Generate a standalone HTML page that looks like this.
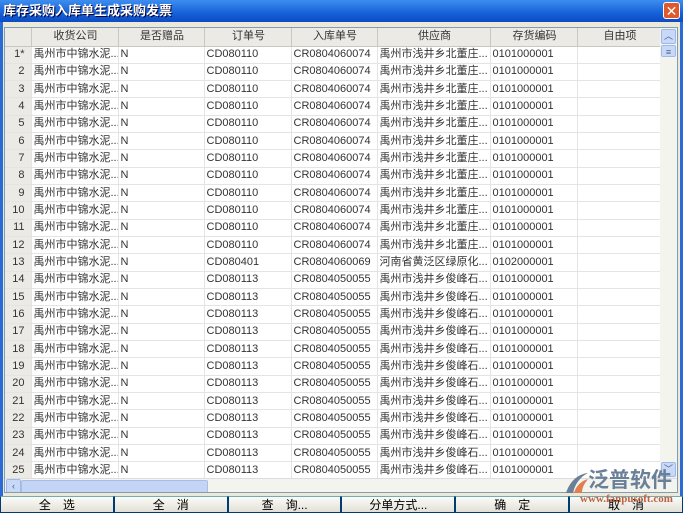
<!DOCTYPE html><html><head><meta charset="utf-8"><style>
body{margin:0;width:683px;height:513px;overflow:hidden;background:#d4d0c8;font-family:"Liberation Sans","Noto Sans CJK SC",sans-serif;font-size:11px;position:relative}
#t{position:absolute;left:0;top:0;width:683px;height:22px;background:linear-gradient(#3d8ef0,#1560d8 60%,#0c4cc4);color:#fff;font-weight:bold;font-size:13px;line-height:22px;padding-left:3px;box-sizing:border-box;text-shadow:1px 1px #003}
#x{position:absolute;right:3px;top:2px;width:17px;height:17px;background:#e0582e;border:1px solid #fff;border-radius:3px;color:#fff;font-size:14px;line-height:16px;text-align:center;box-sizing:border-box}
#f{position:absolute;left:0;top:22px;width:683px;height:474px;background:#ece9d8;border-left:3px solid #2a6bd8;border-right:3px solid #2a6bd8;box-sizing:border-box}
#g{position:absolute;left:4px;top:27px;width:674px;height:466px;background:#fff;border:1px solid #7f9db9;box-sizing:border-box;overflow:hidden}
table{border-collapse:collapse;table-layout:fixed;position:absolute;left:0;top:0;width:656px}
td{height:17.33px;line-height:15px;padding:0 0 0 2px;border-right:1px solid #e4e4e4;border-bottom:1px solid #e4e4e4;white-space:nowrap;overflow:hidden;color:#333;box-sizing:border-box}
td:first-child{background:#ebeae4;text-align:right;padding-right:6px;padding-left:0;color:#333}
tr.h td{height:18px;background:#ebeae4;text-align:center;border-right:1px solid #c8c7c0;border-bottom:1px solid #c8c7c0}
#vs{position:absolute;left:655px;top:0;width:17px;height:450px;background:#f4f4ee}
#hs{position:absolute;left:0;top:450px;width:672px;height:15px;background:#f4f4ee;border-top:1px solid #ddd}
#hb{position:absolute;left:16px;top:1px;width:185px;height:12px;background:#c4d4f4;border:1px solid #a8bde8;border-radius:2px}
.sb{position:absolute;width:15px;height:15px;background:#c8d8f8;border:1px solid #a0b8e8;border-radius:2px;box-sizing:border-box;font-size:9px;color:#4d6185;text-align:center;line-height:13px}
#b{position:absolute;left:0;top:496px;width:683px;height:17px;display:flex}
#b div{flex:1;background:linear-gradient(#fbfbf8,#e2e0d6);border:1px solid #003c74;border-top:1px solid #7aa;box-sizing:border-box;text-align:center;line-height:16px;font-size:12px}
#logo{position:absolute;left:588px;top:469px;font-size:21px;line-height:24px;color:#6a7f98;font-weight:bold;white-space:nowrap;z-index:4}
#sw{position:absolute;left:564px;top:471px;z-index:4}
#url{position:absolute;left:580px;top:493px;font-size:11px;line-height:12px;color:#c06040;font-family:"Liberation Serif",serif;font-weight:bold;z-index:5;white-space:nowrap}
</style></head><body>
<div id="t">库存采购入库单生成采购发票</div><div id="x">✕</div>
<div id="f"></div>
<div id="g">
<table>
<colgroup><col style="width:26px"><col style="width:87px"><col style="width:86px"><col style="width:87px"><col style="width:86px"><col style="width:113px"><col style="width:87px"><col style="width:84px"></colgroup>
<tr class="h"><td></td><td>收货公司</td><td>是否赠品</td><td>订单号</td><td>入库单号</td><td>供应商</td><td>存货编码</td><td>自由项</td></tr>
<tr><td>1*</td><td>禹州市中锦水泥...</td><td>N</td><td>CD080110</td><td>CR0804060074</td><td>禹州市浅井乡北董庄...</td><td>0101000001</td><td></td></tr>
<tr><td>2</td><td>禹州市中锦水泥...</td><td>N</td><td>CD080110</td><td>CR0804060074</td><td>禹州市浅井乡北董庄...</td><td>0101000001</td><td></td></tr>
<tr><td>3</td><td>禹州市中锦水泥...</td><td>N</td><td>CD080110</td><td>CR0804060074</td><td>禹州市浅井乡北董庄...</td><td>0101000001</td><td></td></tr>
<tr><td>4</td><td>禹州市中锦水泥...</td><td>N</td><td>CD080110</td><td>CR0804060074</td><td>禹州市浅井乡北董庄...</td><td>0101000001</td><td></td></tr>
<tr><td>5</td><td>禹州市中锦水泥...</td><td>N</td><td>CD080110</td><td>CR0804060074</td><td>禹州市浅井乡北董庄...</td><td>0101000001</td><td></td></tr>
<tr><td>6</td><td>禹州市中锦水泥...</td><td>N</td><td>CD080110</td><td>CR0804060074</td><td>禹州市浅井乡北董庄...</td><td>0101000001</td><td></td></tr>
<tr><td>7</td><td>禹州市中锦水泥...</td><td>N</td><td>CD080110</td><td>CR0804060074</td><td>禹州市浅井乡北董庄...</td><td>0101000001</td><td></td></tr>
<tr><td>8</td><td>禹州市中锦水泥...</td><td>N</td><td>CD080110</td><td>CR0804060074</td><td>禹州市浅井乡北董庄...</td><td>0101000001</td><td></td></tr>
<tr><td>9</td><td>禹州市中锦水泥...</td><td>N</td><td>CD080110</td><td>CR0804060074</td><td>禹州市浅井乡北董庄...</td><td>0101000001</td><td></td></tr>
<tr><td>10</td><td>禹州市中锦水泥...</td><td>N</td><td>CD080110</td><td>CR0804060074</td><td>禹州市浅井乡北董庄...</td><td>0101000001</td><td></td></tr>
<tr><td>11</td><td>禹州市中锦水泥...</td><td>N</td><td>CD080110</td><td>CR0804060074</td><td>禹州市浅井乡北董庄...</td><td>0101000001</td><td></td></tr>
<tr><td>12</td><td>禹州市中锦水泥...</td><td>N</td><td>CD080110</td><td>CR0804060074</td><td>禹州市浅井乡北董庄...</td><td>0101000001</td><td></td></tr>
<tr><td>13</td><td>禹州市中锦水泥...</td><td>N</td><td>CD080401</td><td>CR0804060069</td><td>河南省黄泛区绿原化...</td><td>0102000001</td><td></td></tr>
<tr><td>14</td><td>禹州市中锦水泥...</td><td>N</td><td>CD080113</td><td>CR0804050055</td><td>禹州市浅井乡俊峰石...</td><td>0101000001</td><td></td></tr>
<tr><td>15</td><td>禹州市中锦水泥...</td><td>N</td><td>CD080113</td><td>CR0804050055</td><td>禹州市浅井乡俊峰石...</td><td>0101000001</td><td></td></tr>
<tr><td>16</td><td>禹州市中锦水泥...</td><td>N</td><td>CD080113</td><td>CR0804050055</td><td>禹州市浅井乡俊峰石...</td><td>0101000001</td><td></td></tr>
<tr><td>17</td><td>禹州市中锦水泥...</td><td>N</td><td>CD080113</td><td>CR0804050055</td><td>禹州市浅井乡俊峰石...</td><td>0101000001</td><td></td></tr>
<tr><td>18</td><td>禹州市中锦水泥...</td><td>N</td><td>CD080113</td><td>CR0804050055</td><td>禹州市浅井乡俊峰石...</td><td>0101000001</td><td></td></tr>
<tr><td>19</td><td>禹州市中锦水泥...</td><td>N</td><td>CD080113</td><td>CR0804050055</td><td>禹州市浅井乡俊峰石...</td><td>0101000001</td><td></td></tr>
<tr><td>20</td><td>禹州市中锦水泥...</td><td>N</td><td>CD080113</td><td>CR0804050055</td><td>禹州市浅井乡俊峰石...</td><td>0101000001</td><td></td></tr>
<tr><td>21</td><td>禹州市中锦水泥...</td><td>N</td><td>CD080113</td><td>CR0804050055</td><td>禹州市浅井乡俊峰石...</td><td>0101000001</td><td></td></tr>
<tr><td>22</td><td>禹州市中锦水泥...</td><td>N</td><td>CD080113</td><td>CR0804050055</td><td>禹州市浅井乡俊峰石...</td><td>0101000001</td><td></td></tr>
<tr><td>23</td><td>禹州市中锦水泥...</td><td>N</td><td>CD080113</td><td>CR0804050055</td><td>禹州市浅井乡俊峰石...</td><td>0101000001</td><td></td></tr>
<tr><td>24</td><td>禹州市中锦水泥...</td><td>N</td><td>CD080113</td><td>CR0804050055</td><td>禹州市浅井乡俊峰石...</td><td>0101000001</td><td></td></tr>
<tr><td>25</td><td>禹州市中锦水泥...</td><td>N</td><td>CD080113</td><td>CR0804050055</td><td>禹州市浅井乡俊峰石...</td><td>0101000001</td><td></td></tr>
</table>
<div id="vs"><div class="sb" style="left:1px;top:1px">︿</div><div class="sb" style="left:1px;top:17px;height:12px">≡</div><div class="sb" style="left:1px;top:434px">﹀</div></div>
<div id="hs"><div class="sb" style="left:1px;top:0">‹</div><div id="hb"></div></div>
</div>
<svg id="sw" width="26" height="24" viewBox="0 0 26 24"><path d="M2 22 C6 10 14 3 24 2 C16 6 11 13 9 22 Z" fill="#6a7f98"/><path d="M10 22 C12 15 17 10 24 8 C20 13 18 17 18 22 Z" fill="#e08050"/></svg>
<div id="logo">泛普软件</div>
<div id="url">www.fanpusoft.com</div>
<div id="b"><div>全　选</div><div>全　消</div><div>查　询...</div><div>分单方式...</div><div>确　定</div><div>取　消</div></div>
</body></html>
